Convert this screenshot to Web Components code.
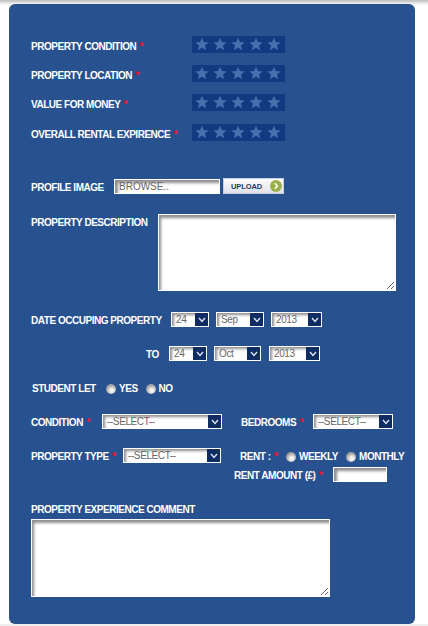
<!DOCTYPE html>
<html>
<head>
<meta charset="utf-8">
<title>Property review</title>
<style>
  html, body { margin: 0; height: 626px; overflow: hidden; background: #fff; }
  body {
    background:
      linear-gradient(to top, #eeeeee 2px, transparent 2px),
      linear-gradient(#bdbdbd, #f4f4f4 4px, #fff 6px);
    font: bold 10px/12px "Liberation Sans", Arial, sans-serif;
    letter-spacing: -0.47px;
    color: #fff;
  }
</style>
</head>
<body>
<review-form></review-form>

<script>
class ReqMark extends HTMLElement {
  connectedCallback() {
    this.attachShadow({ mode: "open" });
    this.shadowRoot.innerHTML = `
      <style>
        :host { display: inline; color: #f5102c; font-size: 11px; line-height: 0; margin-left: 1px; }
      </style>*`;
  }
}
customElements.define("req-mark", ReqMark);

class StarBar extends HTMLElement {
  connectedCallback() {
    this.attachShadow({ mode: "open" });
    const star = `<svg width="14" height="14" viewBox="0 0 24 24"><path fill="#4570ae" d="M12 1l3.2 7.6 8.2.7-6.2 5.4 1.900 8L12 18.400 4.900 22.700l1.900-8L.6 9.300l8.200-.7z"/></svg>`;
    this.shadowRoot.innerHTML = `
      <style>
        :host {
          display: flex;
          width: 93px;
          height: 17px;
          padding-left: 3px;
          box-sizing: border-box;
          gap: 4px;
          background: #113a80;
        }
        svg { display: block; margin-top: 1px; }
      </style>
      ${star.repeat(5)}`;
  }
}
customElements.define("star-bar", StarBar);

class FakeSelect extends HTMLElement {
  connectedCallback() {
    this.attachShadow({ mode: "open" });
    const w = this.getAttribute("width") || 50;
    const arrow = this.getAttribute("arrow") || 13;
    this.shadowRoot.innerHTML = `
      <style>
        :host {
          display: flex;
          width: ${w}px;
          height: 15px;
          box-sizing: border-box;
          border: 1px solid #fff;
          background: #fff;
          font: 10px/12px "Liberation Sans", Arial, sans-serif;
          letter-spacing: -0.4px;
          color: #666;
        }
        .val {
          flex: 1;
          min-width: 0;
          padding: 1px 0 0 4px;
          box-shadow: inset 2px 2px 3px #8f8f8f;
          white-space: nowrap;
        }
        .arrow {
          width: ${arrow}px;
          background: #0f2c63;
          display: flex;
          align-items: center;
          justify-content: center;
        }
      </style>
      <div class="val"><slot></slot></div>
      <div class="arrow">
        <svg width="8" height="6" viewBox="0 0 8 6"><path d="M1 1l3 3.500L7 1" fill="none" stroke="#dfe6f2" stroke-width="1.400"/></svg>
      </div>`;
  }
}
customElements.define("fake-select", FakeSelect);

class RadioOpt extends HTMLElement {
  connectedCallback() {
    this.attachShadow({ mode: "open" });
    this.shadowRoot.innerHTML = `
      <style>
        :host { display: inline-flex; align-items: center; gap: 3px; white-space: nowrap; }
        i {
          flex: none;
          width: 10px;
          height: 10px;
          border-radius: 50%;
          background: radial-gradient(circle at 58% 65%, #f2f2f2 0 18%, #a0a0a0 62%, #8c8c8c 100%);
        }
      </style>
      <i></i><slot></slot>`;
  }
}
customElements.define("radio-opt", RadioOpt);

class TextBox extends HTMLElement {
  connectedCallback() {
    this.attachShadow({ mode: "open" });
    const w = this.getAttribute("width") || 100;
    this.shadowRoot.innerHTML = `
      <style>
        :host {
          display: block;
          width: ${w}px;
          height: 15px;
          box-sizing: border-box;
          border: 1px solid #fff;
          background: #fff;
          box-shadow: inset 3px 3px 3px #8f8f8f;
          font: 10px/11px "Liberation Sans", Arial, sans-serif;
          letter-spacing: 0;
          color: #666;
          padding: 1px 0 0 4px;
        }
      </style>
      <slot></slot>`;
  }
}
customElements.define("text-box", TextBox);

class UploadBtn extends HTMLElement {
  connectedCallback() {
    this.attachShadow({ mode: "open" });
    this.shadowRoot.innerHTML = `
      <style>
        :host {
          display: flex;
          align-items: center;
          width: 61px;
          height: 16px;
          box-sizing: border-box;
          border: 1px solid #c4d0e2;
          background: linear-gradient(#fbfcfd, #dfe3ea);
          font: bold 7.5px "Liberation Sans", Arial, sans-serif;
          letter-spacing: -0.1px;
          color: #223a6b;
          padding-left: 7px;
        }
        svg { margin-left: auto; margin-right: 1px; }
      </style>
      UPLOAD
      <svg width="12" height="12" viewBox="0 0 12 12">
        <circle cx="6" cy="6" r="6" fill="#9cb04a"/>
        <path d="M4.800 3.300L7.300 6l-2.500 2.700" fill="none" stroke="#fff" stroke-width="1.600"/>
      </svg>`;
  }
}
customElements.define("upload-btn", UploadBtn);

class ReviewForm extends HTMLElement {
  connectedCallback() {
    this.attachShadow({ mode: "open" });
    const rating = (label, h) => `
      <div class="rating" style="height:${h}px">
        <span>${label} <req-mark></req-mark></span><star-bar></star-bar>
      </div>`;
    this.shadowRoot.innerHTML = `
      <style>
        :host {
          display: block;
          box-sizing: border-box;
          width: 406px;
          height: 620px;
          margin: 4px 0 0 9px;
          padding: 32px 0 0 22px;
          background: #28528f;
          border-radius: 6px;
        }
        span { white-space: nowrap; }
        .row { display: flex; align-items: center; }
        /* labels sit a pixel under the middle of the boxes beside them */
        .row > span { padding-top: 2px; }
        .rating { display: grid; grid-template-columns: 161px 93px; align-items: start; }
        .rating span { padding-top: 5px; }
        textarea {
          display: block;
          box-sizing: border-box;
          border: 1px solid #fff;
          background: #fff;
          box-shadow: inset 2px 3px 3px #8f8f8f;
          margin: 0;
          padding: 2px;
          outline: 0;
        }
        .top { align-items: flex-start; }
      </style>

      ${rating("PROPERTY CONDITION", 29)}
      ${rating("PROPERTY LOCATION", 29)}
      ${rating("VALUE FOR MONEY", 30)}
      ${rating("OVERALL RENTAL EXPIRENCE", 17)}

      <div class="row" style="margin-top:37px">
        <span style="width:83px;padding-top:4px">PROFILE IMAGE</span>
        <text-box width="106">BROWSE..</text-box>
        <upload-btn style="margin-left:3px"></upload-btn>
      </div>

      <div class="row top" style="margin-top:20px">
        <span style="width:127px;padding-top:3px">PROPERTY DESCRIPTION</span>
        <textarea style="width:238px;height:77px"></textarea>
      </div>

      <div class="row" style="margin-top:21px">
        <span style="width:140px">DATE OCCUPING PROPERTY</span>
        <fake-select width="38">24</fake-select>
        <fake-select width="48" style="margin-left:7px">Sep</fake-select>
        <fake-select width="51" style="margin-left:7px">2013</fake-select>
      </div>

      <div class="row" style="margin-top:19px">
        <span style="width:23px;margin-left:115px">TO</span>
        <fake-select width="38">24</fake-select>
        <fake-select width="47" style="margin-left:7px">Oct</fake-select>
        <fake-select width="51" style="margin-left:8px">2013</fake-select>
      </div>

      <div class="row" style="margin-top:22px;margin-left:1px;height:12px">
        <span style="width:74px;padding-top:0">STUDENT LET</span>
        <radio-opt>YES</radio-opt>
        <radio-opt style="margin-left:8px">NO</radio-opt>
      </div>

      <div class="row" style="margin-top:19px">
        <span style="width:71px">CONDITION <req-mark></req-mark></span>
        <fake-select width="120">--SELECT--</fake-select>
        <span style="width:72px;margin-left:19px">BEDROOMS<req-mark></req-mark></span>
        <fake-select width="80">--SELECT--</fake-select>
      </div>

      <div class="row" style="margin-top:19px">
        <span style="width:92px">PROPERTY TYPE <req-mark></req-mark></span>
        <fake-select width="98">--SELECT--</fake-select>
        <span style="width:46px;margin-left:19px">RENT : <req-mark></req-mark></span>
        <radio-opt style="margin-top:2px">WEEKLY</radio-opt>
        <radio-opt style="margin:2px 0 0 8px">MONTHLY</radio-opt>
      </div>

      <div class="row" style="margin-top:4px;margin-left:203px">
        <span style="width:99px">RENT AMOUNT (£) <req-mark></req-mark></span>
        <text-box width="54"></text-box>
      </div>

      <div style="margin-top:22px">PROPERTY EXPERIENCE COMMENT</div>
      <textarea style="width:299px;height:78px;margin-top:3px"></textarea>
    `;
  }
}
customElements.define("review-form", ReviewForm);
</script>
</body>
</html>
